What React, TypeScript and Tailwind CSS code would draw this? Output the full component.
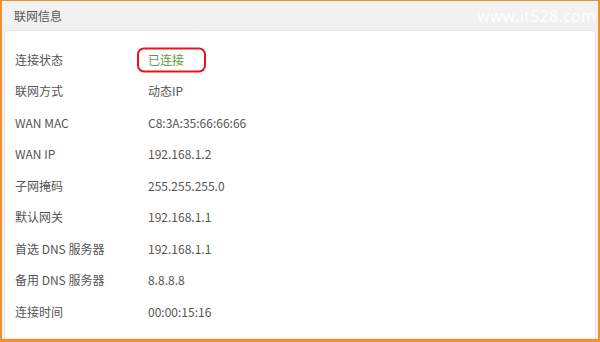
import React from "react";

const rows: [string, string][] = [
  ["连接状态", "已连接"],
  ["联网方式", "动态IP"],
  ["WAN MAC", "C8:3A:35:66:66:66"],
  ["WAN IP", "192.168.1.2"],
  ["子网掩码", "255.255.255.0"],
  ["默认网关", "192.168.1.1"],
  ["首选 DNS 服务器", "192.168.1.1"],
  ["备用 DNS 服务器", "8.8.8.8"],
  ["连接时间", "00:00:15:16"],
];

export default function App() {
  return (
    <div
      className="w-[600px] h-[342px] overflow-hidden bg-[#f1f1f1] border-t-[1px] border-l-[2px] border-r-[2px] border-b-[3px] border-[#f0902c] flex flex-col"
      style={{ fontFamily: '"Noto Sans CJK SC", "Noto Sans", sans-serif' }}
    >
      <div className="h-[29px] flex items-center justify-between pl-[12px] pr-[2px]">
        <span className="text-[12px] text-[#555]">联网信息</span>
        <span className="text-[16px] text-white/90 tracking-[0.3px]" style={{ fontFamily: '"Open Sans", "Noto Sans", sans-serif' }}>
          www.it528.com
        </span>
      </div>
      <div className="flex-1 ml-[2px] mr-[2px] bg-white rounded-[4px] border border-[#e6e6e6] pt-[13px] px-[10px]">
        {rows.map(([k, v], i) => (
          <div key={k} className="h-[31.5px] flex items-center text-[12px] text-[#555]">
            <span className="w-[133px]">{k}</span>
            {i === 0 ? (
              <span className="relative flex items-center h-[18px] text-[#5c9a40]">
                {v}
                <span className="absolute left-[-11px] top-1/2 -translate-y-1/2 w-[69px] h-[25px] border-2 border-[#e8141a] rounded-[7px]" />
              </span>
            ) : (
              <span>{v}</span>
            )}
          </div>
        ))}
      </div>
    </div>
  );
}
